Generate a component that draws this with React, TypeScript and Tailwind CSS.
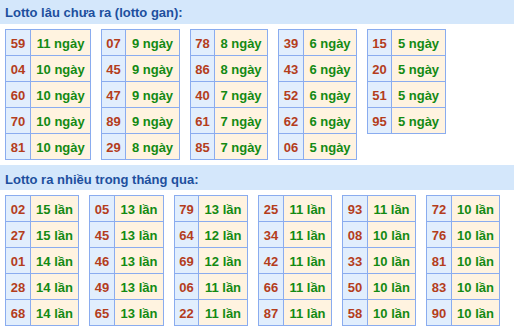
type Group = { w: string; nw: string; rows: [string, string][] };

const GAN: Group[] = [
  { w: 'w-[86px]', nw: 'w-[25px]', rows: [['59', '11'], ['04', '10'], ['60', '10'], ['70', '10'], ['81', '10']] },
  { w: 'w-[79px]', nw: 'w-[24px]', rows: [['07', '9'], ['45', '9'], ['47', '9'], ['89', '9'], ['29', '8']] },
  { w: 'w-[78px]', nw: 'w-[24px]', rows: [['78', '8'], ['86', '8'], ['40', '7'], ['61', '7'], ['85', '7']] },
  { w: 'w-[79px]', nw: 'w-[25px]', rows: [['39', '6'], ['43', '6'], ['52', '6'], ['62', '6'], ['06', '5']] },
  { w: 'w-[79px]', nw: 'w-[24px]', rows: [['15', '5'], ['20', '5'], ['51', '5'], ['95', '5']] },
];

const NHIEU: Group[] = [
  { w: 'w-[74px]', nw: 'w-[25px]', rows: [['02', '15'], ['27', '15'], ['01', '14'], ['28', '14'], ['68', '14']] },
  { w: 'w-[75px]', nw: 'w-[25px]', rows: [['05', '13'], ['45', '13'], ['46', '13'], ['49', '13'], ['65', '13']] },
  { w: 'w-[74px]', nw: 'w-[24px]', rows: [['79', '13'], ['64', '12'], ['69', '12'], ['06', '11'], ['22', '11']] },
  { w: 'w-[74px]', nw: 'w-[25px]', rows: [['25', '11'], ['34', '11'], ['42', '11'], ['66', '11'], ['87', '11']] },
  { w: 'w-[74px]', nw: 'w-[25px]', rows: [['93', '11'], ['08', '10'], ['33', '10'], ['50', '10'], ['58', '10']] },
  { w: 'w-[74px]', nw: 'w-[25px]', rows: [['72', '10'], ['76', '10'], ['81', '10'], ['83', '10'], ['90', '10']] },
];

function LotoTable({ g, unit }: { g: Group; unit: string }) {
  return (
    <div className={`${g.w} self-start border border-[#8aacef]`}>
      {g.rows.map(([num, n], i) => (
        <div key={i} className={i > 0 ? 'flex h-[26px] border-t border-[#8aacef]' : 'flex h-[25px]'}>
          <div className={`${g.nw} flex items-center justify-center border-r border-[#8aacef] bg-[#e1eefd] pt-[2px] text-[#b43d1c]`}>
            {num}
          </div>
          <div className="flex flex-1 items-center justify-center whitespace-nowrap bg-[#fff3e0] pt-[2px] text-[#138a13]">
            {n} {unit}
          </div>
        </div>
      ))}
    </div>
  );
}

export default function App() {
  return (
    <div className="h-[328px] w-[514px] overflow-hidden bg-white text-[13px] font-bold leading-[15px] [font-family:'Liberation_Sans',Arial,sans-serif]">
      <div className="h-[24px] bg-[#d4e7fb] pl-[5px] pt-[5px] text-[#1d4f9e]">Lotto lâu chưa ra (lotto gan):</div>
      <div className="mt-[5px] flex gap-[10px] pl-[5px]">
        {GAN.map((g, i) => (
          <LotoTable key={i} g={g} unit="ngày" />
        ))}
      </div>
      <div className="mt-[5px] h-[25px] bg-[#d4e7fb] pl-[5px] pt-[7px] text-[#1d4f9e]">Lotto ra nhiều trong tháng qua:</div>
      <div className="mt-[5px] flex gap-[10px] pl-[5px]">
        {NHIEU.map((g, i) => (
          <LotoTable key={i} g={g} unit="lần" />
        ))}
      </div>
    </div>
  );
}
